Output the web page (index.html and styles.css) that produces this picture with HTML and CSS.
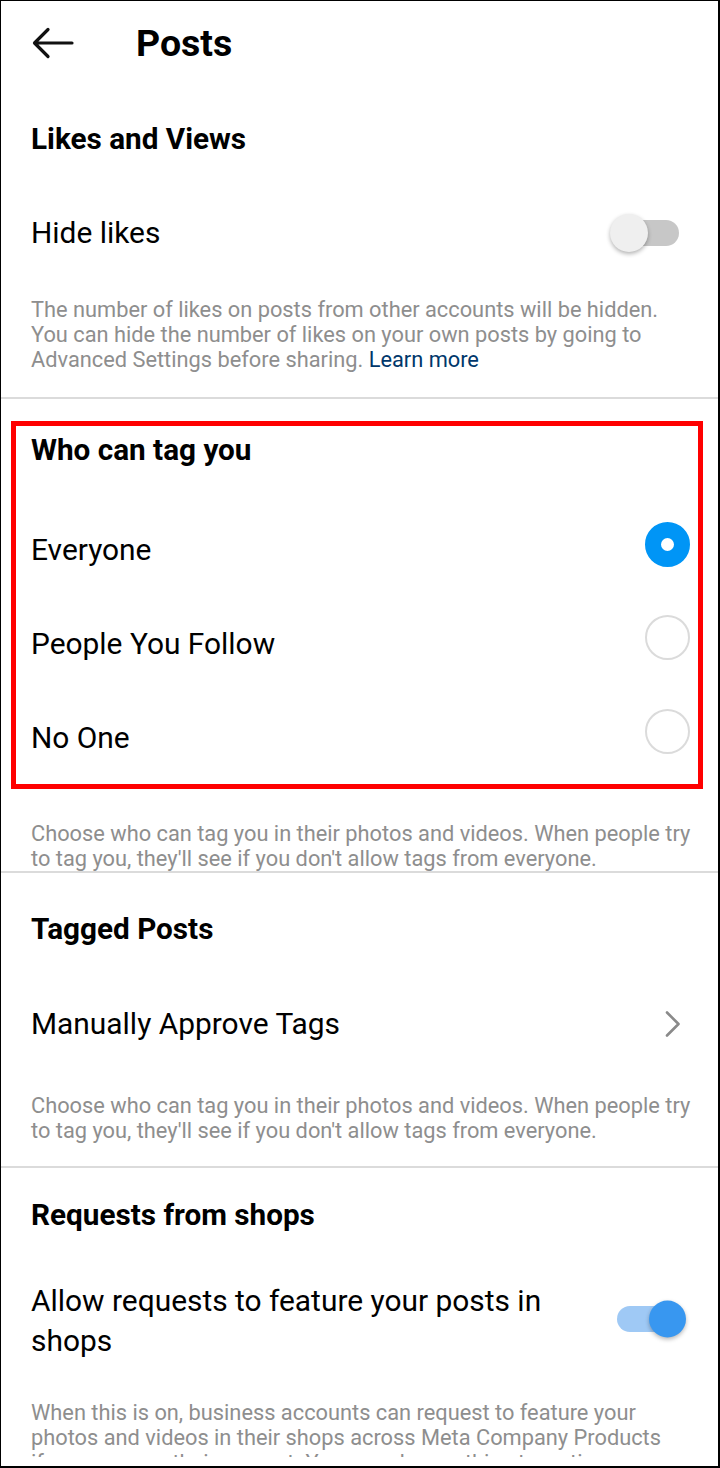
FILE: index.html
```html
<!DOCTYPE html>
<html>
<head>
<meta charset="utf-8">
<link rel="stylesheet" href="styles.css">
</head>
<body>
<div class="frame">
  <header class="header">
    <svg class="back" width="42" height="32" viewBox="0 0 42 32">
      <path d="M40 16 H3 M16 2.5 L2.5 16 L16 29.5" fill="none" stroke="#111" stroke-width="3.2" stroke-linecap="round" stroke-linejoin="round"/>
    </svg>
    <h1 class="title">Posts</h1>
  </header>

  <section class="sec sec-likes">
    <h2 class="sec-title">Likes and Views</h2>
    <div class="row">
      <span class="row-label">Hide likes</span>
      <span class="toggle off"><span class="thumb"></span></span>
    </div>
    <p class="desc d1">The number of likes on posts from other accounts will be hidden.<br>You can hide the number of likes on your own posts by going to<br>Advanced Settings before sharing. <span class="link">Learn more</span></p>
  </section>
  <div class="divider"></div>

  <div class="redbox">
    <h2 class="sec-title box-title">Who can tag you</h2>
    <div class="row radio-row">
      <span class="row-label">Everyone</span>
      <span class="radio on"></span>
    </div>
    <div class="row radio-row">
      <span class="row-label">People You Follow</span>
      <span class="radio"></span>
    </div>
    <div class="row radio-row">
      <span class="row-label">No One</span>
      <span class="radio"></span>
    </div>
  </div>
  <p class="desc d2">Choose who can tag you in their photos and videos. When people try<br>to tag you, they'll see if you don't allow tags from everyone.</p>
  <div class="divider"></div>

  <section class="sec">
    <h2 class="sec-title t3">Tagged Posts</h2>
    <div class="row row3">
      <span class="row-label">Manually Approve Tags</span>
      <svg class="chev" width="18" height="28" viewBox="0 0 18 28">
        <path d="M3 2.5 L14.5 14 L3 25.5" fill="none" stroke="#8a8a8a" stroke-width="2.6" stroke-linecap="round" stroke-linejoin="round"/>
      </svg>
    </div>
    <p class="desc d3">Choose who can tag you in their photos and videos. When people try<br>to tag you, they'll see if you don't allow tags from everyone.</p>
  </section>
  <div class="divider"></div>

  <section class="sec">
    <h2 class="sec-title t4">Requests from shops</h2>
    <div class="row row4">
      <span class="row-label multi">Allow requests to feature your posts in<br>shops</span>
      <span class="toggle on"><span class="thumb"></span></span>
    </div>
    <p class="desc d4">When this is on, business accounts can request to feature your<br>photos and videos in their shops across Meta Company Products<br>if you approve their request. You can change this at any time.</p>
  </section>
</div>
</body>
</html>
```

FILE: styles.css
```css
* { box-sizing: border-box; }
html, body { margin: 0; padding: 0; background: #fff; }
body { font-family: Roboto, "Noto Sans", Arial, sans-serif; color: #000; }

.frame {
  width: 720px;
  height: 1468px;
  border-left: 1px solid #000;
  border-top: 1px solid #000;
  border-right: 2px solid #000;
  border-bottom: 2px solid #000;
  overflow: hidden;
  background: #fff;
}

.header {
  height: 83px;
  display: flex;
  align-items: center;
}
.back { margin-left: 31px; margin-top: 1px; }
.title {
  margin: 0 0 0 62px;
  font-size: 37.5px;
  font-weight: 700;
  line-height: 40px;
}

.sec { padding: 0 0 0 30px; }

.sec-title {
  margin: 35px 0 0 0;
  height: 40px;
  line-height: 40px;
  font-size: 29.7px;
  font-weight: 700;
  white-space: nowrap;
}

.row {
  display: flex;
  align-items: center;
  justify-content: space-between;
  height: 94px;
  margin-top: 27px;
  padding-right: 38px;
}
.row-label {
  font-size: 29.9px;
  line-height: 40px;
  font-weight: 400;
  white-space: nowrap;
}

.desc {
  margin: 17px 0 0 0;
  font-size: 21.8px;
  line-height: 25px;
  color: #8e8e8e;
  padding-right: 2px;
  white-space: nowrap;
}
.link { color: #00376b; }

.d1 { margin-bottom: 25px; }

.divider { height: 2px; background: #dbdbdb; }

/* toggle */
.toggle {
  position: relative;
  width: 68px;
  height: 26px;
  border-radius: 13px;
  flex: none;
}
.toggle .thumb {
  position: absolute;
  top: 50%;
  width: 38px;
  height: 38px;
  border-radius: 50%;
  transform: translateY(-50%);
}
.toggle.off { background: #c7c7c7; margin-right: 1px; }
.toggle.off .thumb {
  left: -1px;
  background: #efefef;
  box-shadow: 0 2px 4px rgba(0,0,0,0.3);
}
.toggle.on { background: #9fc9f5; width: 64px; margin-right: 4px; margin-top: -5px; }
.toggle.on .thumb {
  right: -5px;
  width: 37px;
  height: 37px;
  background: #3897f0;
  box-shadow: 0 2px 4px rgba(0,0,0,0.28);
}

/* red box */
.redbox {
  margin: 22px 0 0 10px;
  width: 692px;
  height: 368px;
  border: 5px solid #ff0000;
  padding: 4px 8px 0 15px;
}
.box-title { margin-top: 0; }
.radio-row { margin-top: 0; padding-right: 0; }
.redbox .box-title + .radio-row { margin-top: 30px; }
.radio-row .row-label { margin-top: 6px; }
.radio {
  width: 45px;
  height: 45px;
  border-radius: 50%;
  border: 2px solid #dbdbdb;
  flex: none;
  margin-top: -8px;
}
.radio.on {
  border: 16px solid #0095f6;
  background: #fff;
  margin-top: -6px;
}

.d2 { margin: 32px 0 0 0; padding-left: 30px; }

.t3 { margin-top: 36px; }
.row3 { margin-top: 28px; padding-right: 36px; }
.chev { flex: none; }
.d3 { margin-top: 22px; margin-bottom: 23px; }

.t4 { margin-top: 27px; }
.row4 { height: auto; margin-top: 46px; padding-right: 33px; }
.row-label.multi { line-height: 40px; }
.d4 { margin-top: 39px; height: 57px; overflow: hidden; }
```
